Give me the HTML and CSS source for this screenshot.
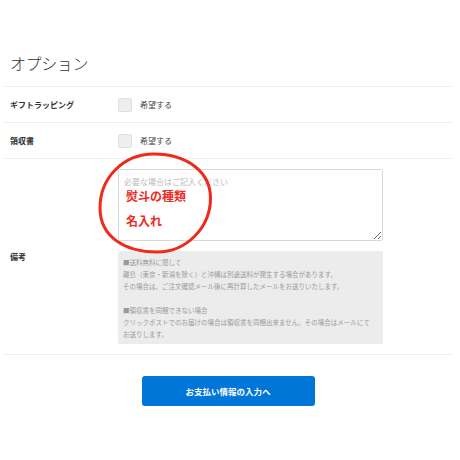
FILE: index.html
```html
<!DOCTYPE html>
<html lang="ja">
<head>
<meta charset="utf-8">
<link rel="stylesheet" href="styles.css">
</head>
<body>
<div class="page">
  <h1 class="title">オプション</h1>
  <div class="rows">
    <div class="row">
      <div class="label">ギフトラッピング</div>
      <div class="value"><span class="check"><span class="box"></span>希望する</span></div>
    </div>
    <div class="row">
      <div class="label">領収書</div>
      <div class="value"><span class="check"><span class="box"></span>希望する</span></div>
    </div>
    <div class="row row-note">
      <div class="label">備考</div>
      <div class="value">
        <textarea class="memo" placeholder="必要な場合はご記入ください"></textarea>
        <div class="note">
          <p>■送料無料に関して</p>
          <p>離島（東京・新潟を除く）と沖縄は別途送料が発生する場合があります。</p>
          <p>その場合は、ご注文確認メール後に再計算したメールをお送りいたします。</p>
          <p class="blank">&nbsp;</p>
          <p>■領収書を同梱できない場合</p>
          <p>クリックポストでのお届けの場合は領収書を同梱出来ません。その場合はメールにて</p>
          <p>お送りします。</p>
        </div>
      </div>
    </div>
  </div>
  <div class="actions"><button class="next">お支払い情報の入力へ</button></div>

  <div class="annot">
    <svg class="ring" width="460" height="460" viewBox="0 0 460 460">
      <path d="M154 154 C187 154 210.5 172 210.5 198 C210.5 228 186 252 157 252 C125 252 100 237 100 208 C100 178 123 154 154 154 Z" fill="none" stroke="#ee2a1d" stroke-width="3"/>
    </svg>
    <span class="annot-text a1">熨斗の種類</span>
    <span class="annot-text a2">名入れ</span>
  </div>
</div>
</body>
</html>
```

FILE: styles.css
```css
html, body {
  margin: 0;
  padding: 0;
  background: #fff;
}
body {
  font-family: "Noto Sans CJK JP", "Noto Sans", sans-serif;
  color: #333;
}
.page {
  position: relative;
  width: 460px;
  height: 460px;
  padding: 0 4px;
  box-sizing: border-box;
  overflow: hidden;
}
.title {
  margin: 0;
  padding: 51px 6px 11px;
  font-size: 16px;
  line-height: 24px;
  font-weight: 300;
  color: #333;
  letter-spacing: -0.4px;
}
.rows {
  width: 448px;
}
.row {
  display: flex;
  align-items: center;
  border-top: 1px solid #f0f0f0;
  min-height: 35px;
}
.row-note {
  border-bottom: 1px solid #f0f0f0;
  padding: 10px 0;
}
.label {
  width: 108px;
  padding-left: 6px;
  font-size: 8px;
  font-weight: bold;
  color: #333;
}
.value {
  width: 265px;
  display: flex;
  flex-direction: column;
  gap: 10px;
}
.check {
  display: flex;
  align-items: center;
  gap: 8px;
  font-size: 8px;
  color: #444;
}
.box {
  width: 14px;
  height: 14px;
  box-sizing: border-box;
  background: #eee;
  border: 1px solid #e0e0e0;
  border-radius: 2px;
}
.memo {
  display: block;
  width: 265px;
  height: 72px;
  box-sizing: border-box;
  margin: 0;
  border: 1px solid #d9d9d9;
  border-radius: 2px;
  padding: 6px 5px;
  font-family: "Noto Sans CJK JP", "Noto Sans", sans-serif;
  font-size: 8px;
  line-height: 12px;
  resize: vertical;
  background: #fff;
}
.memo::placeholder {
  color: #bbb;
}
.note {
  background: #ececec;
  border-radius: 2px;
  padding: 5px 5px 4px;
  font-size: 6.5px;
  line-height: 12px;
  color: #9a9a9a;
}
.note p {
  margin: 0;
  white-space: nowrap;
}
.actions {
  width: 448px;
  display: flex;
  justify-content: center;
  padding-top: 21px;
}
.next {
  width: 173px;
  height: 30px;
  border: none;
  border-radius: 3px;
  background: #0076d8;
  color: #fff;
  font-family: "Noto Sans CJK JP", "Noto Sans", sans-serif;
  font-size: 8.5px;
  font-weight: bold;
  padding: 0;
}
.annot {
  position: absolute;
  left: 0;
  top: 0;
  width: 460px;
  height: 460px;
  pointer-events: none;
}
.ring {
  position: absolute;
  left: 0;
  top: 0;
}
.annot-text {
  position: absolute;
  left: 126px;
  font-size: 12px;
  line-height: 16px;
  font-weight: bold;
  color: #ee2a1d;
  white-space: nowrap;
}
.a1 { top: 188px; }
.a2 { top: 213px; }
```
